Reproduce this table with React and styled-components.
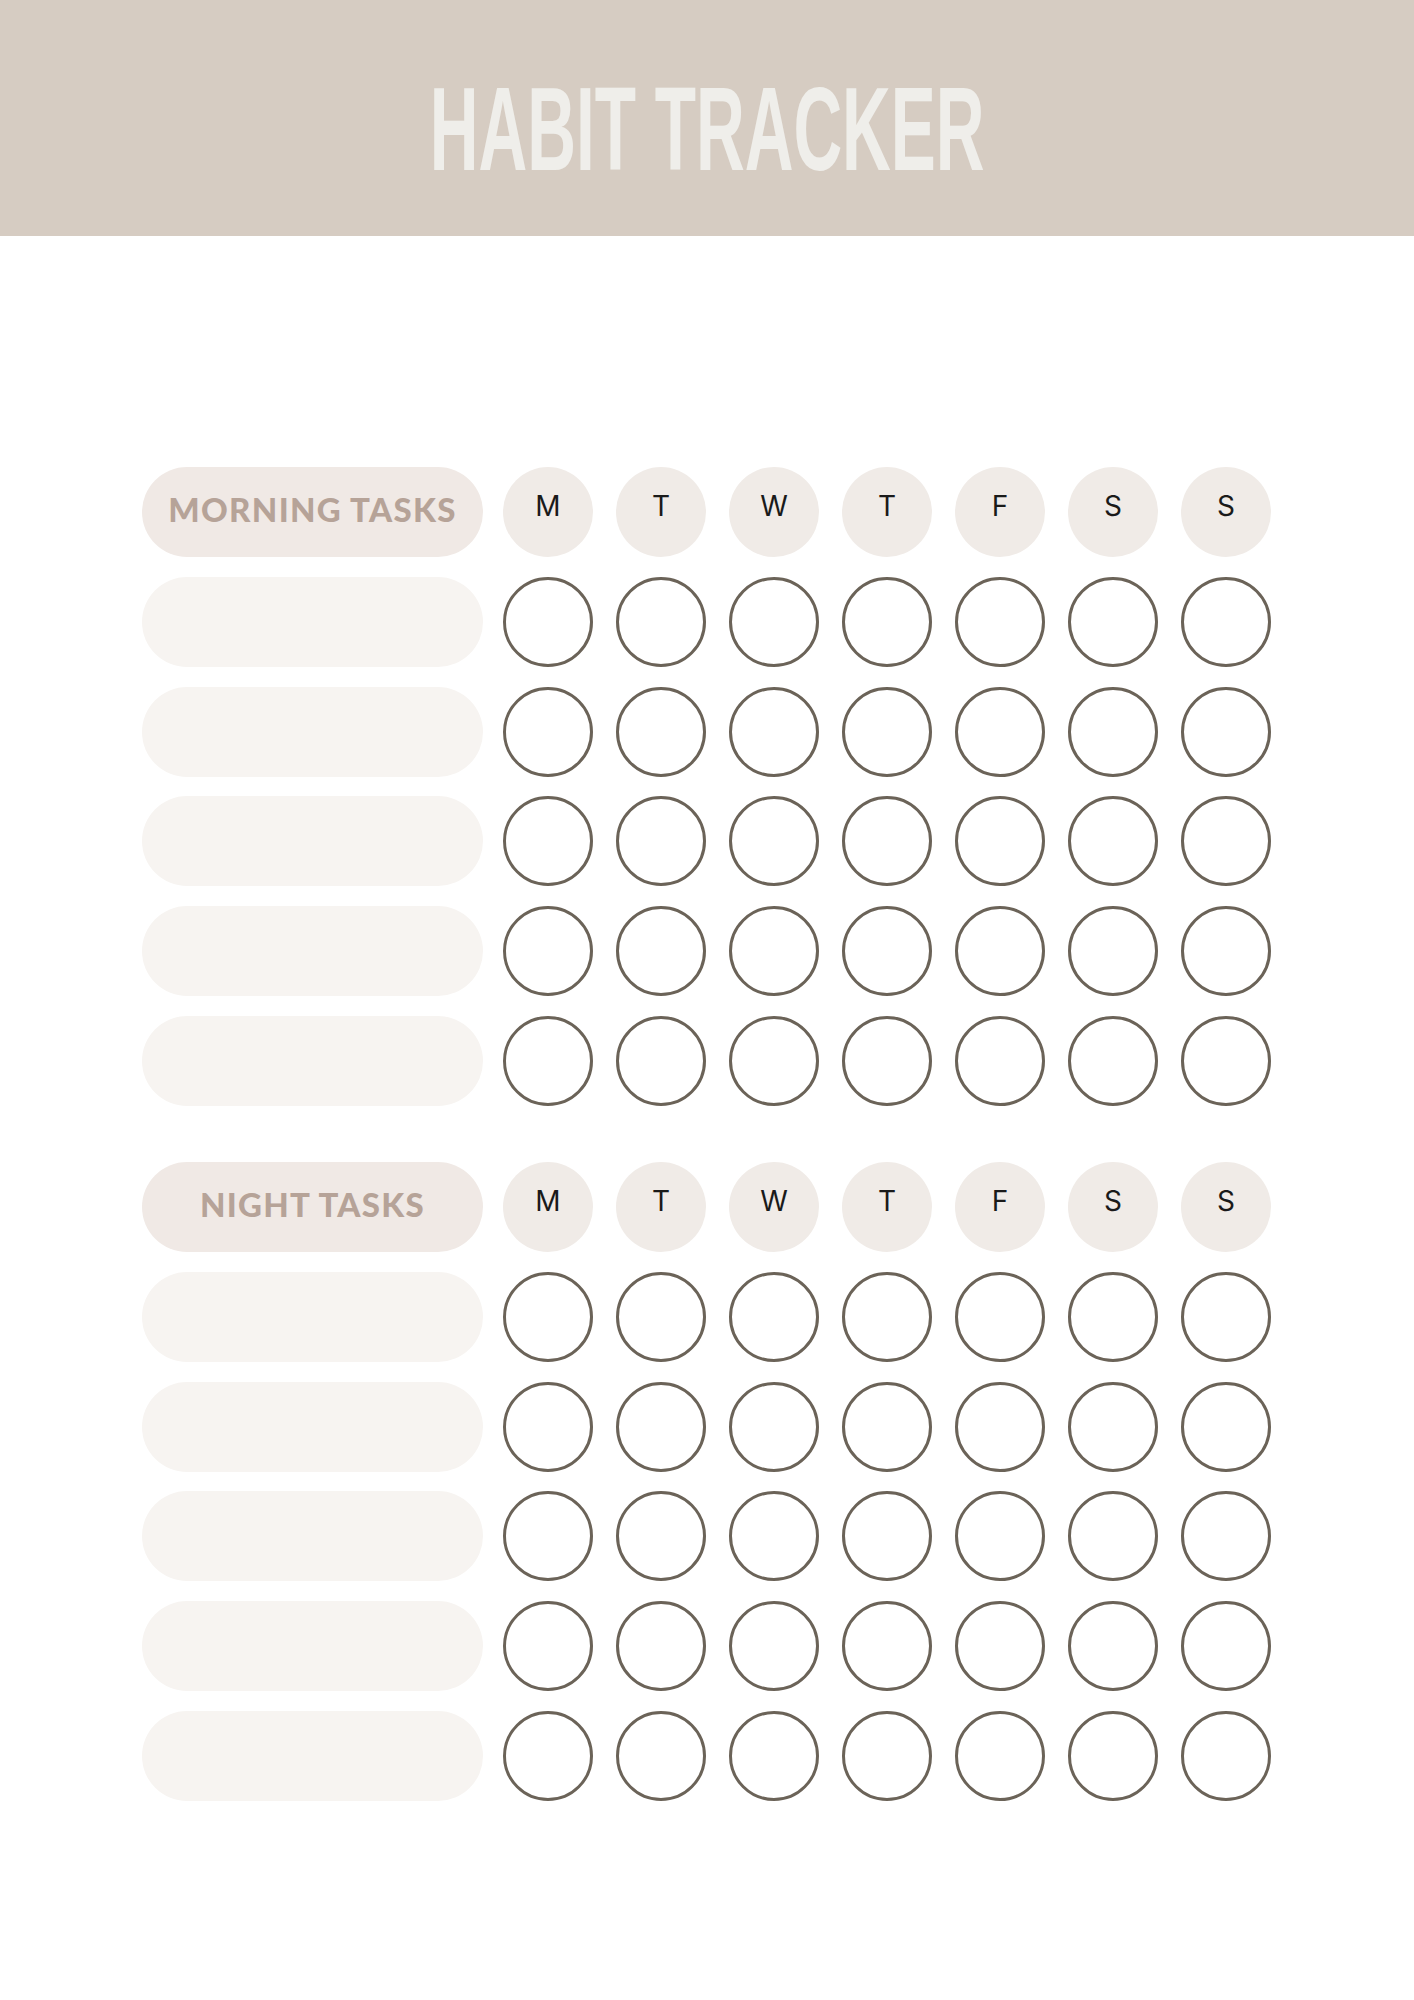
import React from 'react';
import styled, { createGlobalStyle } from 'styled-components';

const DAYS = ['M', 'T', 'W', 'T', 'F', 'S', 'S'];

const sections = [
  { id: 'morning', title: 'MORNING TASKS', rows: 5 },
  { id: 'night', title: 'NIGHT TASKS', rows: 5 },
];

const HabitTracker = () => {
  return (
    <Page>
      <GlobalStyle />
      <Banner>
        <Title>HABIT TRACKER</Title>
      </Banner>

      <Sheet>
        {sections.map(section => (
          <Section key={section.id}>
            <Row>
              <LabelPill header>
                <LabelText>{section.title}</LabelText>
              </LabelPill>
              {DAYS.map((day, i) => (
                <DayBadge key={i}>
                  <DayLetter>{day}</DayLetter>
                </DayBadge>
              ))}
            </Row>

            {Array.from({ length: section.rows }).map((_, r) => (
              <Row key={r}>
                <LabelPill />
                {DAYS.map((_, i) => (
                  <CheckCircle key={i} />
                ))}
              </Row>
            ))}
          </Section>
        ))}
      </Sheet>
    </Page>
  );
};

// Styled Components
const GlobalStyle = createGlobalStyle`
  html, body {
    margin: 0;
    padding: 0;
    background: #ffffff;
  }
`;

const Page = styled.div`
  width: 1414px;
  min-height: 2000px;
  background: #ffffff;
  font-family: 'Inter', 'Liberation Sans', sans-serif;
`;

const Banner = styled.header`
  height: 236px;
  background-color: #d6ccc2;
  display: flex;
  align-items: center;
  justify-content: center;
  overflow: hidden;
`;

const Title = styled.h1`
  margin: 0;
  font-family: 'Liberation Sans', Arial, sans-serif;
  font-weight: 700;
  font-size: 119px;
  line-height: 1;
  color: #efeeea;
  white-space: nowrap;
  transform: scaleX(0.567);
  padding-top: 20px;
`;

const Sheet = styled.main`
  padding: 231px 142px 0;
  display: flex;
  flex-direction: column;
  gap: 56px;
`;

const Section = styled.section`
  display: flex;
  flex-direction: column;
  gap: 19.8px;
`;

const Row = styled.div`
  display: flex;
  align-items: center;
  height: 90px;
  gap: 23px;
`;

const LabelPill = styled.div`
  width: 341px;
  height: 90px;
  margin-right: -3px;
  border-radius: 45px;
  background-color: ${props => props.header ? '#f0e9e5' : '#f7f4f1'};
  display: flex;
  align-items: center;
  justify-content: center;
  flex-shrink: 0;
`;

const LabelText = styled.span`
  font-family: 'Lato', 'Liberation Sans', sans-serif;
  font-weight: 900;
  font-size: 33px;
  color: #b6a398;
  letter-spacing: 1.3px;
  margin-top: -6px;
`;

const DayBadge = styled.div`
  width: 90px;
  height: 90px;
  border-radius: 50%;
  background-color: #f0ebe7;
  display: flex;
  align-items: center;
  justify-content: center;
  flex-shrink: 0;
`;

const DayLetter = styled.span`
  font-family: 'Inter', 'Liberation Sans', sans-serif;
  font-weight: 400;
  font-size: 28px;
  color: #1a1a1a;
  margin-top: -12px;
`;

const CheckCircle = styled.div`
  width: 90px;
  height: 90px;
  box-sizing: border-box;
  border-radius: 50%;
  border: 3px solid #6b6358;
  flex-shrink: 0;
`;

export default HabitTracker;
